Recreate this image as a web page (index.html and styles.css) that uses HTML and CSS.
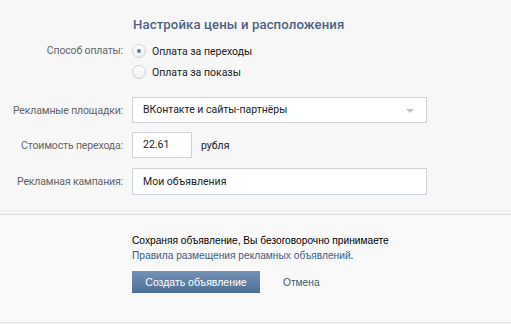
FILE: index.html
```html
<!DOCTYPE html>
<html lang="ru">
<head>
<meta charset="utf-8">
<link rel="stylesheet" href="styles.css">
</head>
<body>
<div class="page">
  <section class="settings">
    <h2 class="title">Настройка цены и расположения</h2>
    <div class="row row-pay">
      <div class="label">Способ оплаты:</div>
      <div class="radios">
        <div class="radio-item"><span class="radio checked"></span><span>Оплата за переходы</span></div>
        <div class="radio-item"><span class="radio"></span><span>Оплата за показы</span></div>
      </div>
    </div>
    <div class="row row-field row-first">
      <div class="label">Рекламные площадки:</div>
      <div class="field select">ВКонтакте и сайты-партнёры<span class="arrow"></span></div>
    </div>
    <div class="row row-field">
      <div class="label">Стоимость перехода:</div>
      <div class="cost">
        <div class="field small">22.61</div>
        <span class="unit">рубля</span>
      </div>
    </div>
    <div class="row row-field row-last">
      <div class="label">Рекламная кампания:</div>
      <div class="field">Мои объявления</div>
    </div>
  </section>
  <section class="footer">
    <p class="note">Сохраняя объявление, Вы безоговорочно принимаете<br><a class="link" href="#">Правила размещения рекламных объявлений</a>.</p>
    <div class="actions">
      <button class="btn">Создать объявление</button>
      <a class="cancel" href="#">Отмена</a>
    </div>
  </section>
</div>
</body>
</html>
```

FILE: styles.css
```css
html, body {
  margin: 0;
  padding: 0;
  background: #f7f7f7;
}
.page {
  width: 511px;
  height: 325px;
  font-family: Roboto, "Open Sans", sans-serif;
  font-size: 10.5px;
  color: #222;
}
.settings {
  padding: 15px 0 15px 0;
  border-bottom: 1px solid #ececec;
}
.title {
  margin: 0 0 6px 133px;
  font-size: 13.2px;
  letter-spacing: 0.1px;
  font-weight: 500;
  color: #4d6483;
  line-height: 20px;
}
.row {
  display: grid;
  grid-template-columns: 123px 1fr;
  column-gap: 9px;
  align-items: center;
}
.label {
  text-align: right;
  color: #666;
  letter-spacing: -0.15px;
}
.row-pay {
  align-items: start;
}
.row-pay .label {
  line-height: 20px;
}
.radios {
  display: flex;
  flex-direction: column;
  gap: 1px;
}
.radio-item {
  display: flex;
  align-items: center;
  gap: 6px;
  height: 20px;
  color: #222;
}
.radio {
  width: 14px;
  height: 14px;
  border-radius: 50%;
  border: 1px solid #cdd1d6;
  background: linear-gradient(#ffffff, #eeeeee);
  box-sizing: border-box;
  position: relative;
}
.radio.checked::after {
  content: "";
  position: absolute;
  left: 4px;
  top: 4px;
  width: 4px;
  height: 4px;
  border-radius: 50%;
  background: #5b7ea6;
}
.row-field {
  margin-top: 9px;
}
.row-first {
  margin-top: 15px;
}
.row-last {
  margin-top: 10px;
}
.field {
  box-sizing: border-box;
  width: 295px;
  height: 27px;
  line-height: 25px;
  padding: 0 10px;
  border: 1px solid #cdd3d9;
  background: #fff;
  color: #222;
  position: relative;
}
.select {
  height: 26px;
  line-height: 24px;
}
.arrow {
  position: absolute;
  right: 12px;
  top: 11px;
  width: 0;
  height: 0;
  border-left: 4px solid transparent;
  border-right: 4px solid transparent;
  border-top: 4px solid #c4c4c4;
}
.cost {
  display: flex;
  align-items: center;
  gap: 9px;
}
.field.small {
  width: 60px;
  height: 26px;
  line-height: 24px;
}
.footer {
  box-sizing: border-box;
  margin-top: 3px;
  padding: 18px 0 0 132px;
  height: 109px;
  border-top: 1px solid #dadada;
  border-bottom: 1px solid #e3e3e3;
  background: #f9f9f9;
  font-family: "Liberation Sans", Arial, sans-serif;
  font-size: 10.2px;
}
.note {
  margin: 0;
  line-height: 15px;
  color: #000;
}
.link {
  color: #3d6086;
  text-decoration: none;
}
.actions {
  display: flex;
  align-items: center;
  margin-top: 8px;
  gap: 23px;
}
.btn {
  width: 128px;
  height: 22px;
  border: 0;
  padding: 0;
  background: linear-gradient(#7392b6, #4d6e95);
  color: #fff;
  font-family: "Liberation Sans", Arial, sans-serif;
  font-size: 10.5px;
}
.cancel {
  color: #3d5a7a;
  text-decoration: none;
}
```
